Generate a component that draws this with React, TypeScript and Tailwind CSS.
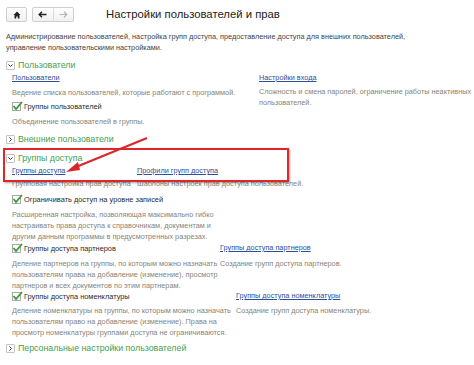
import React from "react";

function Expander({ open }: { open: boolean }) {
  return (
    <span className="flex h-[9px] w-[9px] items-center justify-center rounded-[1px] border border-[#c4c4c4] bg-white">
      <svg width="5" height="5" viewBox="0 0 5 5">
        {open ? (
          <path d="M0.5 1.5 L2.5 3.5 L4.5 1.5" fill="none" stroke="#333" strokeWidth="1" />
        ) : (
          <path d="M1.5 0.5 L3.5 2.5 L1.5 4.5" fill="none" stroke="#333" strokeWidth="1" />
        )}
      </svg>
    </span>
  );
}

function SectionHeader({ title, open }: { title: string; open: boolean }) {
  return (
    <div className="flex h-[14px] items-center gap-[3px] pl-[6px]">
      <Expander open={open} />
      <span className="text-[8.8px] leading-[14px] text-[#3e9f54]">{title}</span>
    </div>
  );
}

function Link({ children }: { children: React.ReactNode }) {
  return (
    <span className="block h-[12px] whitespace-nowrap text-[7.3px] leading-[12px] text-[#2f4f9a] underline decoration-[#2f4f9a]">
      {children}
    </span>
  );
}

function Hint({ children }: { children: React.ReactNode }) {
  return <p className="whitespace-nowrap text-[7.3px] leading-[11px] text-[#86857a]">{children}</p>;
}

function Check({ label }: { label: string }) {
  return (
    <div className="flex h-[12px] items-center gap-[3px]">
      <span className="relative h-[9px] w-[9px] border border-[#a9a9a9] bg-white">
        <svg className="absolute -left-[1px] -top-[2px]" width="11" height="10" viewBox="0 0 11 10">
          <path d="M1.5 5 L4 8 L10 1" fill="none" stroke="#3d9a3a" strokeWidth="1.8" />
        </svg>
      </span>
      <span className="whitespace-nowrap text-[7.4px] leading-[11px] text-[#2a2a2a]">{label}</span>
    </div>
  );
}

export default function App() {
  return (
    <div className="relative h-[365px] w-[474px] overflow-hidden bg-white font-['Liberation_Sans',Arial,sans-serif]">
      <div className="flex items-center px-[6px] pt-[7px]">
        <div className="flex h-[15px] w-[21px] items-center justify-center rounded-[2px] border border-[#cfcfcf] bg-gradient-to-b from-white to-[#f0f0f0]">
          <svg width="8" height="8" viewBox="0 0 8 8">
            <path d="M4 0.5 L7.5 4 L6.5 4 L6.5 7.5 L4.8 7.5 L4.8 5.5 L3.2 5.5 L3.2 7.5 L1.5 7.5 L1.5 4 L0.5 4 Z" fill="#222" />
          </svg>
        </div>
        <div className="ml-[5px] flex h-[15px] w-[42px] rounded-[2px] border border-[#cfcfcf] bg-gradient-to-b from-white to-[#f0f0f0]">
          <div className="flex flex-1 items-center justify-center border-r border-[#dcdcdc]">
            <svg width="9" height="7" viewBox="0 0 9 7">
              <path d="M8.5 3.5 H1.5 M4 0.8 L1.2 3.5 L4 6.2" fill="none" stroke="#222" strokeWidth="1.4" />
            </svg>
          </div>
          <div className="flex flex-1 items-center justify-center">
            <svg width="9" height="7" viewBox="0 0 9 7">
              <path d="M0.5 3.5 H7.5 M5 0.8 L7.8 3.5 L5 6.2" fill="none" stroke="#b5b5b5" strokeWidth="1.2" />
            </svg>
          </div>
        </div>
        <h1 className="ml-[32px] text-[11.3px] leading-[15px] text-[#222]">Настройки пользователей и прав</h1>
      </div>

      <p className="mt-[9px] px-[6px] text-[7.3px] leading-[11px] text-[#444]">
        Администрирование пользователей, настройка групп доступа, предоставление доступа для внешних пользователей,
        <br />
        управление пользовательскими настройками.
      </p>

      <div className="mt-[5px]">
        <SectionHeader title="Пользователи" open />
        <div className="flex pl-[12px]">
          <div className="w-[247px]">
            <Link>Пользователи</Link>
            <div className="mt-[3px]">
              <Hint>Ведение списка пользователей, которые работают с программой.</Hint>
            </div>
            <div className="mt-[2px]">
              <Check label="Группы пользователей" />
            </div>
            <div className="mt-[4px]">
              <Hint>Объединение пользователей в группы.</Hint>
            </div>
          </div>
          <div className="w-[212px]">
            <Link>Настройки входа</Link>
            <div className="mt-[2px]">
              <Hint>
                Сложность и смена паролей, ограничение работы неактивных
                <br />
                пользователей.
              </Hint>
            </div>
          </div>
        </div>
      </div>

      <div className="mt-[5px]">
        <SectionHeader title="Внешние пользователи" open={false} />
      </div>

      <div className="mt-[5px]">
        <SectionHeader title="Группы доступа" open />
        <div className="pl-[12px]">
          <div className="flex">
            <div className="w-[125px]">
              <Link>Группы доступа</Link>
              <div className="mt-[1px]">
                <Hint>Групповая настройка прав доступа</Hint>
              </div>
            </div>
            <div>
              <Link>Профили групп доступа</Link>
              <div className="mt-[1px]">
                <Hint>Шаблоны настроек прав доступа пользователей.</Hint>
              </div>
            </div>
          </div>
          <div className="mt-[4px]">
            <Check label="Ограничивать доступ на уровне записей" />
          </div>
          <div className="mt-[4px]">
            <Hint>
              Расширенная настройка, позволяющая максимально гибко
              <br />
              настраивать права доступа к справочникам, документам и
              <br />
              другим данным программы в предусмотренных разрезах.
            </Hint>
          </div>

          <div className="flex">
            <div className="w-[208px]">
              <Check label="Группы доступа партнеров" />
              <div className="mt-[4px]">
                <Hint>
                  Деление партнеров на группы, по которым можно назначать
                  <br />
                  пользователям права на добавление (изменение), просмотр
                  <br />
                  партнеров и всех документов по этим партнерам.
                </Hint>
              </div>
            </div>
            <div>
              <Link>Группы доступа партнеров</Link>
              <div className="mt-[4px]">
                <Hint>Создание групп доступа партнеров.</Hint>
              </div>
            </div>
          </div>

          <div className="-mt-[1px] flex">
            <div className="w-[224px]">
              <Check label="Группы доступа номенклатуры" />
              <div className="mt-[3px]">
                <Hint>
                  Деление номенклатуры на группы, по которым можно назначать
                  <br />
                  пользователям право на добавление (изменение). Права на
                  <br />
                  просмотр номенклатуры группами доступа не ограничиваются.
                </Hint>
              </div>
            </div>
            <div>
              <Link>Группы доступа номенклатуры</Link>
              <div className="mt-[3px]">
                <Hint>Создание групп доступа номенклатуры.</Hint>
              </div>
            </div>
          </div>
        </div>
      </div>

      <div className="mt-[3px]">
        <SectionHeader title="Персональные настройки пользователей" open={false} />
      </div>

      {/* annotation: red frame and arrow */}
      <div className="pointer-events-none absolute left-[3px] top-[148px] h-[34px] w-[286px] border-2 border-[#e0262b] shadow-[1px_1px_2px_rgba(0,0,0,0.35)]" />
      <svg className="pointer-events-none absolute left-0 top-0" width="474" height="365" viewBox="0 0 474 365">
        <line x1="147" y1="138" x2="76" y2="167" stroke="#d8262a" strokeWidth="2" />
        <path d="M66 172 L78 162 L80 170 Z" fill="#d8262a" />
      </svg>
    </div>
  );
}
